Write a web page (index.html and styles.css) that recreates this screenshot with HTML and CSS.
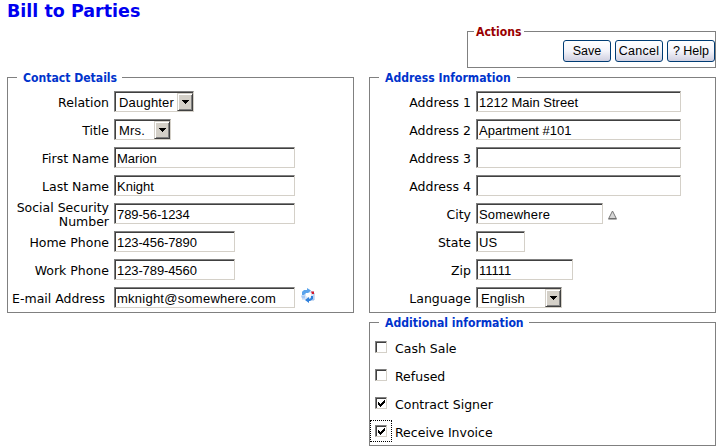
FILE: index.html
```html
<!DOCTYPE html>
<html lang="en">
<head>
<meta charset="utf-8">
<title>Bill to Parties</title>
<link rel="stylesheet" href="styles.css">
</head>
<body>
<header class="top">
  <h1>Bill to Parties</h1>
  <fieldset class="actions">
    <legend>Actions</legend>
    <div class="buttons">
      <button class="save">Save</button>
      <button class="cancel">Cancel</button>
      <button class="help">? Help</button>
    </div>
  </fieldset>
</header>
<main class="columns">
  <div class="column contact">
    <fieldset class="panel">
      <legend class="l-contact">Contact Details</legend>
      <div class="row"><label>Relation</label><div class="select w-relation"><span>Daughter</span><i><svg width="7" height="4" viewBox="0 0 7 4" shape-rendering="crispEdges"><path d="M0 0h7v1h-1v1h-1v1h-1v1h-1v-1h-1v-1h-1v-1h-1z"/></svg></i></div></div>
      <div class="row"><label>Title</label><div class="select w-title"><span>Mrs.</span><i><svg width="7" height="4" viewBox="0 0 7 4" shape-rendering="crispEdges"><path d="M0 0h7v1h-1v1h-1v1h-1v1h-1v-1h-1v-1h-1v-1h-1z"/></svg></i></div></div>
      <div class="row"><label>First Name</label><input class="w-name" value="Marion"></div>
      <div class="row"><label>Last Name</label><input class="w-name" value="Knight"></div>
      <div class="row"><label class="two-line">Social Security Number</label><input class="w-name digits" value="789-56-1234"></div>
      <div class="row"><label>Home Phone</label><input class="w-phone digits" value="123-456-7890"></div>
      <div class="row"><label>Work Phone</label><input class="w-phone digits" value="123-789-4560"></div>
      <div class="row"><label class="email">E-mail Address</label><input class="w-name mail-text" value="mknight@somewhere.com">
        <svg class="mail" width="14" height="15" viewBox="0 0 14 15">
          <path d="M1 3h12v9H1z" fill="#d9e6f9"/>
          <path d="M13 5v7H6" fill="none" stroke="#9ab9e6"/>
          <path d="M5 5h5v3l-2 2-3-2z" fill="#fff"/>
          <path d="M10 3.500h3v2.500h-2z" fill="#d3192c"/>
          <path d="M1 7V4l2-2h3V0l4 2.500L7 5H5L3 7z" fill="#5aa3ec"/>
          <path d="M0 7.500h4v3H1z" fill="#a5c8f5"/>
          <path d="M12 8v3l-3 2H8v2l-4-3 4-3v2l2-1V8z" fill="#2f80dc"/>
        </svg>
      </div>
    </fieldset>
  </div>
  <div class="column address">
    <fieldset class="panel">
      <legend class="l-address">Address Information</legend>
      <div class="row"><label>Address 1</label><input class="w-address" value="1212 Main Street"></div>
      <div class="row"><label>Address 2</label><input class="w-address" value="Apartment #101"></div>
      <div class="row"><label>Address 3</label><input class="w-address"></div>
      <div class="row"><label>Address 4</label><input class="w-address"></div>
      <div class="row"><label>City</label><input class="w-city" value="Somewhere">
        <svg class="lookup" width="9" height="10" viewBox="0 0 9 10"><path d="M4.5 1L8.3 8.5H.7z" fill="#d6d6d6" stroke="#777"/><path d="M.3 9h8.4" stroke="#666"/></svg>
      </div>
      <div class="row"><label>State</label><input class="w-state" value="US"></div>
      <div class="row"><label>Zip</label><input class="w-zip" value="11111"></div>
      <div class="row"><label>Language</label><div class="select w-language"><span>English</span><i><svg width="7" height="4" viewBox="0 0 7 4" shape-rendering="crispEdges"><path d="M0 0h7v1h-1v1h-1v1h-1v1h-1v-1h-1v-1h-1v-1h-1z"/></svg></i></div></div>
    </fieldset>
    <fieldset class="panel extra">
      <legend class="l-extra">Additional information</legend>
      <div class="check"><span class="focus-area"><span class="box"></span></span><span class="caption">Cash Sale</span></div>
      <div class="check"><span class="focus-area"><span class="box"></span></span><span class="caption">Refused</span></div>
      <div class="check"><span class="focus-area"><span class="box"><svg width="7" height="7" viewBox="0 0 7 7" shape-rendering="crispEdges"><path d="M0 2h1v1h1v1h1v-1h1v-1h1v-1h1v-1h1v3h-1v1h-1v1h-1v1h-1v1h-1v-1h-1v-1h-1z"/></svg></span></span><span class="caption">Contract Signer</span></div>
      <div class="check"><span class="focus-area focused"><span class="box"><svg width="7" height="7" viewBox="0 0 7 7" shape-rendering="crispEdges"><path d="M0 2h1v1h1v1h1v-1h1v-1h1v-1h1v-1h1v3h-1v1h-1v1h-1v1h-1v1h-1v-1h-1v-1h-1z"/></svg></span></span><span class="caption">Receive Invoice</span></div>
    </fieldset>
  </div>
</main>
</body>
</html>
```
FILE: styles.css
```css
* { box-sizing: border-box; }
body {
  margin: 0;
  width: 720px;
  height: 446px;
  overflow: hidden;
  background: #fff;
  color: #000;
  font: 12.5px/14px "DejaVu Sans", Verdana, sans-serif;
}
.top {
  display: flex;
  justify-content: space-between;
  height: 70px;
  padding: 0 4px 0 7px;
}
h1 {
  margin: 0;
  color: #0000f0;
  font-size: 17.5px;
  font-weight: bold;
  line-height: 22px;
}
fieldset {
  margin: 0;
  padding: 0;
  min-width: 0;
  border: 1px solid #808080;
}
legend {
  height: 15px;
  font: bold 12.1px/17px "DejaVu Sans Condensed", Tahoma, sans-serif;
  color: #0033cc;
  white-space: nowrap;
}
.actions {
  width: 249px;
  height: 44px;
  margin-top: 24px;
}
.actions legend {
  margin-left: 6px;
  padding: 0 2px;
  width: 50px;
  color: #990000;
}
.buttons {
  display: flex;
  justify-content: flex-end;
  gap: 4px;
  padding-top: 1px;
}
button {
  width: 48px;
  height: 22px;
  padding: 0;
  border: 1px solid #003c74;
  border-radius: 3px;
  background: linear-gradient(#fff, #f4f4fa 50%, #cfcfe0);
  color: #000;
  font: 12.5px/20px "Liberation Sans", Arial, sans-serif;
}
.cancel { letter-spacing: .3px; }
.columns {
  display: grid;
  grid-template-columns: 347px 347px;
  gap: 15px;
  padding-left: 7px;
  align-items: start;
}
.panel {
  height: 243px;
}
.panel legend {
  margin-left: 9px;
  padding-left: 6px;
}
.l-contact { width: 105px; }
.l-address { width: 138px; }
.l-extra { width: 150px; }
.row {
  display: flex;
  align-items: center;
  height: 28px;
  position: relative;
  top: 2px;
}
label {
  width: 101px;
  margin-right: 5px;
  padding-top: 3px;
  text-align: right;
  white-space: nowrap;
}
.two-line { white-space: normal; }
.email { padding-right: 4px; }
input, .select {
  height: 21px;
  border: 1px solid;
  border-color: #808080 #d4d0c8 #d4d0c8 #808080;
  border-radius: 0;
  box-shadow: inset 1px 1px #404040;
  background: #fff;
  font: 13px/18px "Liberation Sans", Arial, sans-serif;
  color: #000;
  outline: none;
}
input { padding: 2px 2px 0; }
.select {
  display: flex;
  justify-content: space-between;
  padding: 1px 0 0 4px;
  letter-spacing: .2px;
}
.select span { padding-top: 1px; }
.digits { letter-spacing: -.1px; }
.mail-text { letter-spacing: .24px; }
.w-city { letter-spacing: .2px; }
.select i {
  display: flex;
  align-items: center;
  justify-content: center;
  width: 16px;
  height: 18px;
  border: 1px solid;
  border-color: #d4d0c8 #404040 #404040 #d4d0c8;
  box-shadow: inset 1px 1px #fff, inset -1px -1px #808080;
  background: #d4d0c8;
}
.w-relation { width: 80px; }
.w-title { width: 57px; }
.w-name { width: 181px; }
.w-phone { width: 121px; }
.w-address { width: 205px; }
.w-city { width: 127px; }
.w-state { width: 49px; }
.w-zip { width: 97px; }
.w-language { width: 86px; }
.mail { margin: -3px 0 0 6px; }
.lookup { margin: 3px 0 0 5px; }
.extra {
  height: 131px;
  margin-top: 2px;
}
.check {
  display: flex;
  align-items: center;
  height: 28px;
  position: relative;
  top: 3px;
}
.caption { padding-top: 3px; }
.focus-area {
  display: flex;
  align-items: center;
  justify-content: center;
  width: 22px;
  height: 22px;
  margin-right: 3px;
  border: 1px solid transparent;
}
.focused { border: 1px dotted #000; }
.box {
  display: flex;
  align-items: center;
  justify-content: center;
  width: 12px;
  height: 12px;
  border: 1px solid;
  border-color: #808080 #d4d0c8 #d4d0c8 #808080;
  box-shadow: inset 1px 1px #404040;
}
```
